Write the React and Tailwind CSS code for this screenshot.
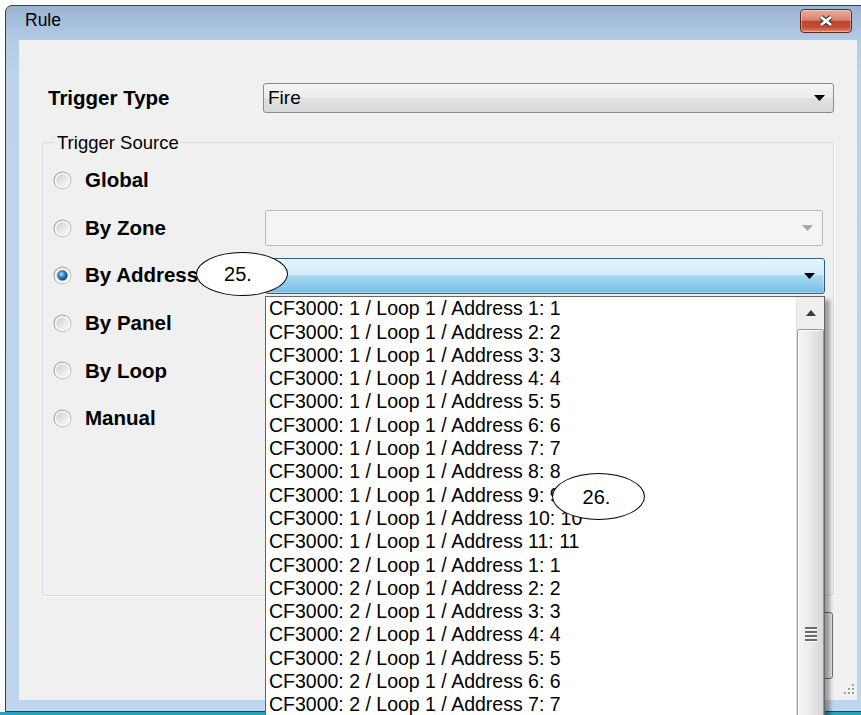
import React from "react";

const ADDRESS_ROWS = [1, 2].flatMap((panel) =>
  Array.from({ length: 11 }, (_, i) => `CF3000: ${panel} / Loop 1 / Address ${i + 1}: ${i + 1}`),
);

const SOURCES = [
  { id: "global", label: "Global" },
  { id: "zone", label: "By Zone", combo: "disabled" },
  { id: "address", label: "By Address", combo: "open", checked: true },
  { id: "panel", label: "By Panel" },
  { id: "loop", label: "By Loop" },
  { id: "manual", label: "Manual" },
];

function Arrow({ color = "#000" }) {
  return (
    <svg width="11" height="6" viewBox="0 0 11 6" className="shrink-0">
      <polygon points="0,0 11,0 5.5,6" fill={color} />
    </svg>
  );
}

function Radio({ id, checked }) {
  return (
    <svg width="19" height="19" viewBox="0 0 19 19" className="shrink-0">
      <defs>
        <linearGradient id={`${id}-ring`} x1="0" y1="0" x2="1" y2="1">
          <stop offset="0" stopColor="#858585" />
          <stop offset="1" stopColor="#d4d4d4" />
        </linearGradient>
        <linearGradient id={`${id}-face`} x1="0" y1="0" x2="1" y2="1">
          <stop offset="0" stopColor="#cfcfcf" />
          <stop offset="1" stopColor="#fbfbfb" />
        </linearGradient>
        <radialGradient id={`${id}-dot`} cx="0.38" cy="0.35" r="0.7">
          <stop offset="0" stopColor="#bfe8fd" />
          <stop offset="0.45" stopColor="#2e8ad0" />
          <stop offset="1" stopColor="#0b3f73" />
        </radialGradient>
      </defs>
      <circle cx="9.5" cy="9.5" r="9" fill={`url(#${id}-ring)`} />
      <circle cx="9.5" cy="9.5" r="8" fill="#f8f8f8" />
      <circle cx="9.5" cy="9.5" r="6.3" fill={`url(#${id}-face)`} />
      {checked && (
        <circle cx="9.5" cy="9.5" r="4.8" fill={`url(#${id}-dot)`} stroke="#1a4a78" strokeWidth="0.6" />
      )}
    </svg>
  );
}

function AddressList() {
  return (
    <div className="absolute left-0 top-full z-10 mt-[2px] flex h-[660px] w-[560px] border border-[#646464] bg-white shadow-[5px_4px_4px_rgba(0,0,0,0.35)]">
      <div className="flex-1 overflow-hidden pl-[3px] pt-[0.5px] font-['Liberation_Sans',Arial,sans-serif] text-[19.5px] leading-[23.3px] text-black">
        {ADDRESS_ROWS.map((row) => (
          <div key={row} className="whitespace-nowrap">
            {row}
          </div>
        ))}
      </div>

      {/* vertical scrollbar */}
      <div className="flex w-[28px] flex-col bg-[#eeeeee] border-l border-[#e2e2e2]">
        <div className="flex h-[32px] items-center justify-center">
          <svg width="10" height="6" viewBox="0 0 10 6">
            <polygon points="0,6 10,6 5,0" fill="#3a3a3a" />
          </svg>
        </div>
        <div className="flex h-[610px] items-center justify-center rounded-[2px] border border-[#979797] bg-[linear-gradient(90deg,#f4f4f4_0%,#ececec_45%,#d6d6d6_100%)] shadow-[inset_1px_1px_0_#ffffff]">
          <div className="flex flex-col gap-[2px]">
            {[0, 1, 2, 3].map((i) => (
              <div key={i} className="h-[2px] w-[12px] bg-[#6b6b6b] shadow-[0_1px_0_#ffffff]" />
            ))}
          </div>
        </div>
      </div>
    </div>
  );
}

function Combo({ kind, width, children }) {
  if (kind === "disabled") {
    return (
      <div
        className="flex h-[36px] items-center justify-end rounded-[3px] border border-[#b4b9bc] bg-[#f4f4f4] pr-[9px]"
        style={{ width }}
      >
        <Arrow color="#a7a7a7" />
      </div>
    );
  }
  return (
    <div className="relative" style={{ width }}>
      <div className="flex h-[36px] items-center justify-end rounded-[3px] border border-[#2c628b] bg-[linear-gradient(180deg,#e6f4fc_0%,#d3ecf9_45%,#a9d9f2_50%,#74bde4_100%)] pr-[9px] shadow-[inset_0_0_0_1px_rgba(255,255,255,0.35)]">
        <Arrow />
      </div>
      {children}
    </div>
  );
}

function CloseButton() {
  return (
    <div className="flex h-[24px] w-[52px] items-center justify-center rounded-[4px] border border-[#5d2721] bg-[linear-gradient(180deg,#e9ab9c_0%,#d9836f_46%,#c2432d_52%,#c54c33_78%,#de8a70_100%)] shadow-[inset_0_0_0_1px_rgba(255,255,255,0.35)]">
      <svg width="18" height="14" viewBox="0 0 18 14">
        <path d="M4 3 L14 11 M14 3 L4 11" stroke="#4b3b38" strokeWidth="5" />
        <path d="M4 3 L14 11 M14 3 L4 11" stroke="#ffffff" strokeWidth="2.8" />
      </svg>
    </div>
  );
}

export default function App() {
  return (
    <div className="relative h-[715px] w-[861px] overflow-hidden bg-white font-['Liberation_Sans',Arial,sans-serif]">
      <div className="ml-[5px] mt-[5px] w-[866px] rounded-t-[7px] border border-[#3e3e3e] bg-[linear-gradient(180deg,#99b4d2_0px,#b3cbe5_34px,#bdd3eb_70px,#bfd5ec_100%)]">
        {/* title bar */}
        <div className="flex h-[34px] items-start justify-between pl-[19px] pr-[18px]">
          <span className="mt-[2px] text-[17.5px] leading-[24px] text-black">Rule</span>
          <div className="mt-[3px]">
            <CloseButton />
          </div>
        </div>

        {/* client area */}
        <div className="relative mx-[13px] h-[660px] bg-[#f0f0f0]">
          <div className="flex items-center pt-[43px]">
            <span className="w-[244px] pl-[29px] text-[20.5px] font-bold text-black">Trigger Type</span>
            <div className="flex h-[30px] w-[571px] items-center justify-between rounded-[3px] border border-[#8a8a8a] bg-[linear-gradient(180deg,#f4f4f4_0%,#ececec_48%,#e1e1e1_52%,#d9d9d9_100%)] pl-[4px] pr-[8px]">
              <span className="text-[19px] text-black">Fire</span>
              <Arrow />
            </div>
          </div>

          <fieldset className="ml-[23px] mt-[19px] h-[463px] w-[792px] rounded-[3px] border border-[#d3dde3] shadow-[1px_1px_0_#ffffff]">
            <legend className="ml-[12px] px-[2px] text-[18.5px] leading-[20px] text-black">Trigger Source</legend>
            <div className="mt-[4px]">
              {SOURCES.map((s) => (
                <div key={s.id} className="flex h-[47.6px] items-center pl-[10px]">
                  <div className="flex w-[212px] items-center">
                    <Radio id={`src-${s.id}`} checked={s.checked} />
                    <span className="ml-[13px] text-[20.5px] font-bold text-black">{s.label}</span>
                  </div>
                  {s.combo === "disabled" && <Combo kind="disabled" width={558} />}
                  {s.combo === "open" && (
                    <Combo kind="open" width={560}>
                      <AddressList />
                    </Combo>
                  )}
                </div>
              ))}
            </div>
          </fieldset>

          <div className="mr-[24px] mt-[16px] flex justify-end">
            <div className="h-[67px] w-[150px] rounded-[3px] border border-[#707070] bg-[#e8e8e8]" />
          </div>

          {/* size grip */}
          <svg className="absolute bottom-[4px] right-[2px]" width="15" height="13" viewBox="0 0 15 13">
            {[
              [12, 1],
              [8, 5],
              [12, 5],
              [4, 9],
              [8, 9],
              [12, 9],
            ].map(([x, y]) => (
              <g key={`${x}-${y}`}>
                <rect x={x + 1} y={y + 1} width="2" height="2" fill="#ffffff" />
                <rect x={x} y={y} width="2" height="2" fill="#9a9a9a" />
              </g>
            ))}
          </svg>
        </div>
        <div className="h-[11px]" />
      </div>
      <div className="h-[3px] bg-[#25a2bd]" />

      {/* callouts */}
      <div className="absolute left-[196px] top-[252px] z-20 flex h-[44px] w-[92px] items-center justify-center rounded-[50%] border-[1.5px] border-black bg-white pr-[8px] text-[20px] text-black">
        25.
      </div>
      <div className="absolute left-[552px] top-[473px] z-20 flex h-[47px] w-[93px] items-center justify-center rounded-[50%] border-[1.5px] border-black bg-white pr-[4px] text-[20px] text-black">
        26.
      </div>
    </div>
  );
}
